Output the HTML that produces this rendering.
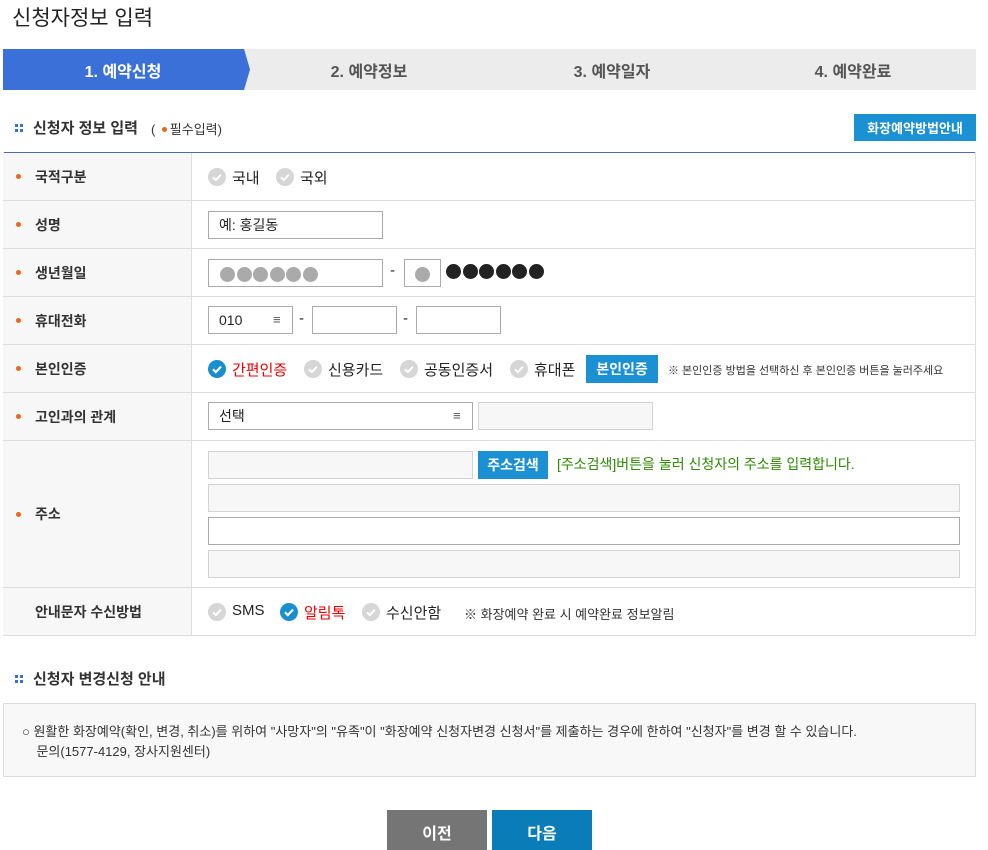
<!DOCTYPE html>
<html><head><meta charset="utf-8"><style>
*{margin:0;padding:0;box-sizing:border-box}
body{width:988px;height:834px;overflow:hidden;background:#fff;font-family:"Liberation Sans","Noto Sans CJK KR",sans-serif;color:#222;position:relative}
.a{position:absolute}
.step{position:absolute;top:49px;height:41px;font-size:16px;font-weight:bold;color:#555;display:flex;align-items:center;justify-content:center}
.lab{position:absolute;left:3px;width:189px;background:#f7f7f7;border-right:1px solid #ddd;font-size:14px;font-weight:bold;color:#333;display:flex;align-items:center;padding-left:32px}
.dot{position:absolute;left:13px;width:5px;height:5px;border-radius:50%;background:#f06414}
.row{position:absolute;left:3px;width:973px;border-bottom:1px solid #ddd}
.inp{position:absolute;border:1px solid #aaa;background:#fff;height:28px;font-size:14px;padding-left:10px;line-height:26px}
.gi{position:absolute;border:1px solid #d3d3d3;background:#f7f7f7}
.ck{position:absolute;width:18px;height:18px}
.t{position:absolute;font-size:15px;white-space:nowrap}
.btn{position:absolute;background:#1b90d2;color:#fff;font-weight:bold;font-size:14px;display:flex;align-items:center;justify-content:center}
.gd{display:inline-block;width:15px;height:15px;border-radius:50%;background:#aaa;margin-right:1.5px;vertical-align:middle}
.bd{display:inline-block;width:15px;height:15px;border-radius:50%;background:#222;margin-right:1.5px;vertical-align:middle}
.ham{position:absolute;font-size:13px;color:#555}
.sq{position:absolute;width:8px;height:8px}
.sq i{position:absolute;width:3px;height:3px;background:#3a6fd0}
</style></head><body>
<svg width="0" height="0" style="position:absolute"><defs>
<symbol id="cg" viewBox="0 0 18 18"><circle cx="9" cy="9" r="9" fill="#d6d6d6"/><path d="M5 9.3l2.8 2.8L13 6.6" stroke="#fff" stroke-width="2" fill="none"/></symbol>
<symbol id="cb" viewBox="0 0 18 18"><circle cx="9" cy="9" r="9" fill="#1a8fd0"/><path d="M5 9.3l2.8 2.8L13 6.6" stroke="#fff" stroke-width="2.2" fill="none"/></symbol>
</defs></svg>

<div class="a" style="left:12px;top:2px;font-size:21px;color:#222">신청자정보 입력</div>

<div class="step" style="left:3px;width:248px;background:#3a70d8;color:#fff;clip-path:polygon(0 0,242px 0,248px 50%,242px 100%,0 100%);padding-right:8px">1. 예약신청</div>
<div class="step" style="left:244px;width:250px;background:#ececec;clip-path:polygon(0 0,244px 0,250px 50%,244px 100%,0 100%,6px 50%)">2. 예약정보</div>
<div class="step" style="left:487px;width:250px;background:#ececec;clip-path:polygon(0 0,244px 0,250px 50%,244px 100%,0 100%,6px 50%)">3. 예약일자</div>
<div class="step" style="left:730px;width:246px;background:#ececec;clip-path:polygon(0 0,246px 0,246px 100%,0 100%,6px 50%)">4. 예약완료</div>

<div class="sq" style="left:15px;top:124px"><i style="left:0;top:0"></i><i style="left:5px;top:0"></i><i style="left:0;top:5px"></i><i style="left:5px;top:5px"></i></div>
<div class="a" style="left:33px;top:117px;font-size:15px;font-weight:bold;color:#333">신청자 정보 입력</div>
<div class="a" style="left:151px;top:119px;font-size:13px;color:#333">(&nbsp;&nbsp;&nbsp;&nbsp;필수입력)</div>
<div class="a" style="left:162px;top:127px;width:5px;height:5px;border-radius:50%;background:#f06414"></div>
<div class="btn" style="left:854px;top:114px;width:122px;height:27px;font-size:13px">화장예약방법안내</div>

<div class="a" style="left:3px;top:152px;width:973px;height:1px;background:#4a6ea5"></div>
<div class="a" style="left:3px;top:152px;width:1px;height:483px;background:#ddd"></div>
<div class="a" style="left:975px;top:152px;width:1px;height:483px;background:#ddd"></div>

<div class="row" style="top:153px;height:48px"></div>
<div class="lab" style="top:153px;height:47px"><span class="dot" style="top:21px"></span>국적구분</div>
<svg class="ck" style="left:208px;top:168px"><use href="#cg"/></svg><span class="t" style="left:232px;top:167px">국내</span>
<svg class="ck" style="left:276px;top:168px"><use href="#cg"/></svg><span class="t" style="left:300px;top:167px">국외</span>

<div class="row" style="top:201px;height:48px"></div>
<div class="lab" style="top:201px;height:47px"><span class="dot" style="top:21px"></span>성명</div>
<div class="inp" style="left:208px;top:211px;width:175px">예: 홍길동</div>

<div class="row" style="top:249px;height:48px"></div>
<div class="lab" style="top:249px;height:47px"><span class="dot" style="top:21px"></span>생년월일</div>
<div class="inp" style="left:208px;top:259px;width:175px;padding-left:11px"><span class="gd"></span><span class="gd"></span><span class="gd"></span><span class="gd"></span><span class="gd"></span><span class="gd"></span></div>
<span class="t" style="left:390px;top:262px">-</span>
<div class="inp" style="left:404px;top:259px;width:37px;padding-left:10px"><span class="gd"></span></div>
<div class="a" style="left:446px;top:263px"><span class="bd"></span><span class="bd"></span><span class="bd"></span><span class="bd"></span><span class="bd"></span><span class="bd"></span></div>

<div class="row" style="top:297px;height:48px"></div>
<div class="lab" style="top:297px;height:47px"><span class="dot" style="top:21px"></span>휴대전화</div>
<div class="inp" style="left:208px;top:306px;width:85px">010<span class="ham" style="left:64px;top:0">≡</span></div>
<span class="t" style="left:299px;top:310px">-</span>
<div class="inp" style="left:312px;top:306px;width:85px"></div>
<span class="t" style="left:403px;top:310px">-</span>
<div class="inp" style="left:416px;top:306px;width:85px"></div>

<div class="row" style="top:345px;height:48px"></div>
<div class="lab" style="top:345px;height:47px"><span class="dot" style="top:21px"></span>본인인증</div>
<svg class="ck" style="left:208px;top:360px"><use href="#cb"/></svg><span class="t" style="left:232px;top:359px;color:#e00">간편인증</span>
<svg class="ck" style="left:304px;top:360px"><use href="#cg"/></svg><span class="t" style="left:328px;top:359px">신용카드</span>
<svg class="ck" style="left:400px;top:360px"><use href="#cg"/></svg><span class="t" style="left:424px;top:359px">공동인증서</span>
<svg class="ck" style="left:510px;top:360px"><use href="#cg"/></svg><span class="t" style="left:534px;top:359px">휴대폰</span>
<div class="btn" style="left:586px;top:355px;width:72px;height:28px">본인인증</div>
<span class="t" style="left:668px;top:362px;font-size:11px;color:#333">※ 본인인증 방법을 선택하신 후 본인인증 버튼을 눌러주세요</span>

<div class="row" style="top:393px;height:48px"></div>
<div class="lab" style="top:393px;height:47px"><span class="dot" style="top:21px"></span>고인과의 관계</div>
<div class="inp" style="left:208px;top:402px;width:265px">선택<span class="ham" style="left:244px;top:0">≡</span></div>
<div class="gi" style="left:478px;top:402px;width:175px;height:28px"></div>

<div class="row" style="top:441px;height:147px"></div>
<div class="lab" style="top:441px;height:146px"><span class="dot" style="top:71px"></span>주소</div>
<div class="gi" style="left:208px;top:451px;width:265px;height:28px"></div>
<div class="btn" style="left:478px;top:451px;width:70px;height:28px">주소검색</div>
<span class="t" style="left:557px;top:454px;font-size:14px;color:#2b8a00">[주소검색]버튼을 눌러 신청자의 주소를 입력합니다.</span>
<div class="gi" style="left:208px;top:484px;width:752px;height:28px"></div>
<div class="inp" style="left:208px;top:517px;width:752px"></div>
<div class="gi" style="left:208px;top:550px;width:752px;height:28px"></div>

<div class="row" style="top:588px;height:48px"></div>
<div class="lab" style="top:588px;height:47px">안내문자 수신방법</div>
<svg class="ck" style="left:208px;top:603px"><use href="#cg"/></svg><span class="t" style="left:232px;top:602px">SMS</span>
<svg class="ck" style="left:280px;top:603px"><use href="#cb"/></svg><span class="t" style="left:304px;top:602px;color:#e00">알림톡</span>
<svg class="ck" style="left:362px;top:603px"><use href="#cg"/></svg><span class="t" style="left:386px;top:602px">수신안함</span>
<span class="t" style="left:464px;top:604px;font-size:13px;color:#333">※ 화장예약 완료 시 예약완료 정보알림</span>

<div class="sq" style="left:15px;top:675px"><i style="left:0;top:0"></i><i style="left:5px;top:0"></i><i style="left:0;top:5px"></i><i style="left:5px;top:5px"></i></div>
<div class="a" style="left:33px;top:668px;font-size:15px;font-weight:bold;color:#333">신청자 변경신청 안내</div>

<div class="a" style="left:3px;top:703px;width:973px;height:74px;background:#f8f8f8;border:1px solid #ddd"></div>
<div class="a" style="left:22px;top:722px;font-size:13px;color:#333;line-height:20px">○ 원활한 화장예약(확인, 변경, 취소)를 위하여 "사망자"의 "유족"이 "화장예약 신청자변경 신청서"를 제출하는 경우에 한하여 "신청자"를 변경 할 수 있습니다.<br>&nbsp;&nbsp;&nbsp;&nbsp;문의(1577-4129, 장사지원센터)</div>

<div class="btn" style="left:387px;top:810px;width:100px;height:40px;background:#757575;font-size:16px;align-items:flex-start;padding-top:10px">이전</div>
<div class="btn" style="left:492px;top:810px;width:100px;height:40px;background:#0a7db8;font-size:16px;align-items:flex-start;padding-top:10px">다음</div>
</body></html>
